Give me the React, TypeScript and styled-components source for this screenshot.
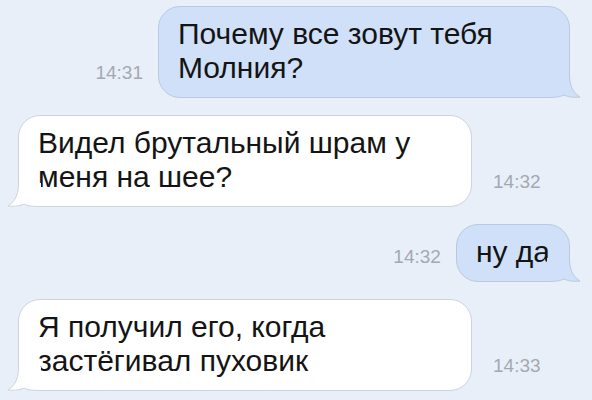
import React from 'react'
import styled, { createGlobalStyle } from 'styled-components'

const GlobalStyle = createGlobalStyle`
  html, body {
    margin: 0;
    background: #e9eff8;
  }
`

interface Message {
  text: string[]
  time: string
  out: boolean
  width?: number
}

const messages: Message[] = [
  { text: ['Почему все зовут тебя', 'Молния?'], time: '14:31', out: true, width: 412 },
  { text: ['Видел брутальный шрам у', 'меня на шее?'], time: '14:32', out: false, width: 454 },
  { text: ['ну да'], time: '14:32', out: true },
  { text: ['Я получил его, когда', 'застёгивал пуховик'], time: '14:33', out: false, width: 454 },
]

const Thread = styled.div`
  width: 592px;
  height: 400px;
  box-sizing: border-box;
  padding: 6px 22px 0 18px;
  display: flex;
  flex-direction: column;
  gap: 17px;
  overflow: hidden;
  font-family: 'Liberation Sans', Arial, sans-serif;
`

const Row = styled.div<{ $out: boolean }>`
  display: flex;
  align-items: flex-end;
  justify-content: ${(p) => (p.$out ? 'flex-end' : 'flex-start')};
  gap: ${(p) => (p.$out ? '15px' : '21px')};
`

const Time = styled.span`
  font-size: 19px;
  line-height: 19px;
  color: #a3a9b2;
  margin-bottom: 16px;
`

const Bubble = styled.div<{ $out: boolean }>`
  position: relative;
  box-sizing: border-box;
  background: ${(p) => (p.$out ? '#cfe0f8' : '#ffffff')};
  border: 1px solid ${(p) => (p.$out ? '#b8c9e0' : '#cdd4de')};
  border-radius: 22px;
  padding: 10px 19px 12px 19px;
  font-size: 30px;
  line-height: 34px;
  color: #141414;
  white-space: nowrap;
`

const Tail = styled.svg<{ $out: boolean }>`
  position: absolute;
  bottom: -1px;
  width: 34px;
  height: 24px;
  ${(p) => (p.$out ? 'right: -12px;' : 'left: -12px; transform: scaleX(-1);')}
`

const BubbleTail: React.FC<{ out: boolean }> = ({ out }) => (
  <Tail $out={out} viewBox="0 0 34 24">
    <path
      d="M0 0 H22.5 C22.5 10 25 18 33 23 C27 23.8 21 23 17 21 C13 23 8 23.5 0 23.5 Z"
      fill={out ? '#cfe0f8' : '#ffffff'}
    />
    <path
      d="M22.5 0 C22.5 10 25 18 33 23 C27 23.8 21 23 17 21 C13 23 8 23.5 0 23.5"
      fill="none"
      stroke={out ? '#b8c9e0' : '#cdd4de'}
      strokeWidth="1"
    />
  </Tail>
)

const App: React.FC = () => (
  <>
    <GlobalStyle />
    <Thread>
      {messages.map((m, i) => {
        const bubble = (
          <Bubble $out={m.out} style={m.width ? { width: m.width } : undefined}>
            {m.text.map((line, j) => (
              <div key={j}>{line}</div>
            ))}
            <BubbleTail out={m.out} />
          </Bubble>
        )
        return (
          <Row key={i} $out={m.out}>
            {m.out && <Time>{m.time}</Time>}
            {bubble}
            {!m.out && <Time>{m.time}</Time>}
          </Row>
        )
      })}
    </Thread>
  </>
)

export default App
